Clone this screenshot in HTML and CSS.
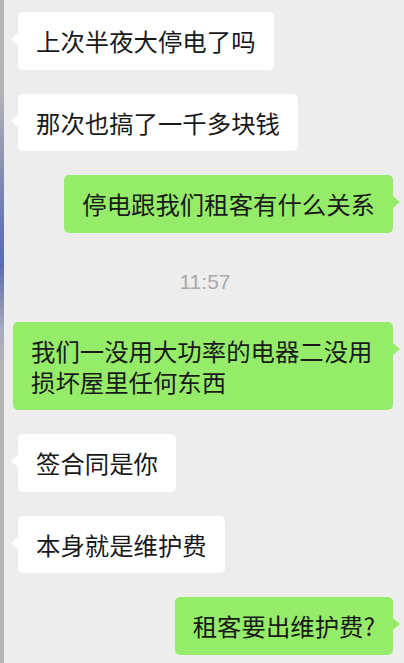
FILE: index.html
```html
<!DOCTYPE html>
<html lang="zh-CN">
<head>
<meta charset="utf-8">
<title>Chat</title>
<link rel="stylesheet" href="styles.css">
</head>
<body>
<div class="screen">
  <div class="edge"></div>
  <div class="chat">
    <div class="bubble left">上次半夜大停电了吗</div>
    <div class="bubble left">那次也搞了一千多块钱</div>
    <div class="bubble right">停电跟我们租客有什么关系</div>
    <div class="time">11:57</div>
    <div class="bubble right">我们一没用大功率的电器二没用损坏屋里任何东西</div>
    <div class="bubble left">签合同是你</div>
    <div class="bubble left">本身就是维护费</div>
    <div class="bubble right">租客要出维护费?</div>
  </div>
</div>
</body>
</html>
```

FILE: styles.css
```css
html, body {
  margin: 0;
  padding: 0;
  background: #ededed;
}

.screen {
  display: flex;
  width: 404px;
  height: 663px;
  overflow: hidden;
}

.edge {
  flex: 0 0 4px;
  background: linear-gradient(to bottom,
    #b6b6b6 0%,
    #b4b4b6 14%,
    #8e94b2 24%,
    #6676b6 34%,
    #5b6cb5 40%,
    #8a90b4 46%,
    #a9abbc 50%,
    #b4b4b4 56%,
    #b6b6b6 100%);
}

.chat {
  flex: 1;
  display: flex;
  flex-direction: column;
  gap: 24px;
  padding: 12px 11px 0 9px;
  font-family: "Noto Sans CJK SC", "Noto Sans", sans-serif;
}

.bubble {
  position: relative;
  max-width: 100%;
  box-sizing: border-box;
  padding: 13.25px 18px;
  font-size: 24.4px;
  line-height: 31px;
  color: #191919;
  border-radius: 5px;
}

.bubble.left {
  align-self: flex-start;
  margin-left: 5px;
  max-width: 375px;
  background: #ffffff;
}

.bubble.right {
  align-self: flex-end;
  background: #95ec69;
}

.bubble::before {
  content: "";
  position: absolute;
  top: 21px;
  width: 0;
  height: 0;
  border-top: 6px solid transparent;
  border-bottom: 6px solid transparent;
}

.bubble.left::before {
  left: -7px;
  border-right: 7px solid #ffffff;
}

.bubble.right::before {
  right: -7px;
  border-left: 7px solid #95ec69;
}

.time {
  align-self: center;
  padding: 14px 0 5px;
  margin-left: 4px;
  font-family: "Liberation Sans", Arial, sans-serif;
  font-size: 21px;
  line-height: 22px;
  color: #aaaaaa;
}
```
